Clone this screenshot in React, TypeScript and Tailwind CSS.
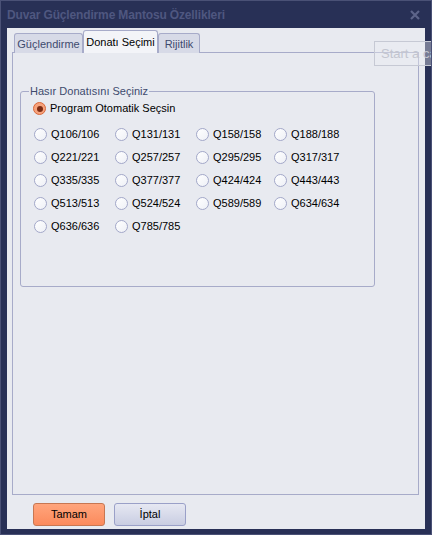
import React from "react";

const sizes = [
  ["Q106/106", "Q131/131", "Q158/158", "Q188/188"],
  ["Q221/221", "Q257/257", "Q295/295", "Q317/317"],
  ["Q335/335", "Q377/377", "Q424/424", "Q443/443"],
  ["Q513/513", "Q524/524", "Q589/589", "Q634/634"],
  ["Q636/636", "Q785/785"],
];

const Radio = ({ checked = false }: { checked?: boolean }) =>
  checked ? (
    <span className="w-[13px] h-[13px] shrink-0 rounded-full border border-[#d8683a] bg-[#f7a27c] flex items-center justify-center">
      <span className="w-[6px] h-[6px] rounded-full bg-[#7c2c14]" />
    </span>
  ) : (
    <span className="w-[13px] h-[13px] shrink-0 rounded-full border border-[#a3a8c9] bg-gradient-to-br from-[#ffffff] to-[#eef0f6]" />
  );

const Option = ({ label, checked }: { label: string; checked?: boolean }) => (
  <label className="flex items-center gap-[4px] h-[23px] text-[11px] text-black whitespace-nowrap">
    <Radio checked={checked} />
    <span>{label}</span>
  </label>
);

const Tabs = () => (
  <div className="h-[25px] flex items-end pl-[2px] -mb-px relative z-10 text-[11px]">
    <div className="w-[69px] h-[20px] pt-[1px] border border-b-0 border-[#a7abc9] rounded-t-[3px] bg-[#d7dae7] text-[#3e4a6e] flex items-center justify-center">
      Güçlendirme
    </div>
    <div className="w-[75px] h-[23px] border border-b-0 border-[#a7abc9] rounded-t-[3px] bg-[#f3f4f8] text-black flex items-center justify-center">
      Donatı Seçimi
    </div>
    <div className="w-[42px] h-[20px] pt-[1px] border border-b-0 border-[#a7abc9] rounded-t-[3px] bg-[#d7dae7] text-[#3e4a6e] flex items-center justify-center">
      Rijitlik
    </div>
  </div>
);

const MeshGroup = () => (
  <fieldset className="ml-[7px] mr-[43px] mt-[31px] h-[203px] border border-[#a7abc9] rounded-[3px] p-0">
    <legend className="ml-[8px] px-[1px] text-[11px] leading-[14px] text-[#3e4a6e]">Hasır Donatısını Seçiniz</legend>
    <div className="pl-[12px] -mt-[1px]">
      <Option label="Program Otomatik Seçsin" checked />
    </div>
    <div className="pl-[13px] grid grid-cols-[81px_81px_78px_auto] mt-[3px]">
      {sizes.flat().map((s) => (
        <Option key={s} label={s} />
      ))}
    </div>
  </fieldset>
);

export default function App() {
  return (
    <div
      className="relative w-[432px] h-[535px] overflow-hidden bg-[#283056] border border-[#4a5176] flex flex-col"
      style={{ fontFamily: '"Liberation Sans", Arial, sans-serif' }}
    >
      <div className="h-[27px] shrink-0 flex items-center justify-between pl-[6px] pr-[11px]">
        <span className="text-[12px] tracking-[-0.15px] font-bold text-[#4f5780]">Duvar Güçlendirme Mantosu Özellikleri</span>
        <svg width="10" height="10" viewBox="0 0 10 10" className="mt-[1px]">
          <path d="M1 1 L9 9 M9 1 L1 9" stroke="#5d648a" strokeWidth="2.2" />
        </svg>
      </div>

      <div className="flex-1 mx-[6px] mb-[5px] bg-[#e8eaf0] flex flex-col pl-[5px] pr-[6px]">
        <Tabs />
        <div className="h-[443px] border border-[#a7abc9] bg-[#e8eaf0] flex flex-col">
          <MeshGroup />
        </div>
        <div className="flex-1 flex items-start pt-[8px] pl-[21px] gap-[9px] text-[11px]">
          <button className="w-[72px] h-[23px] rounded-[3px] border border-[#c77752] bg-gradient-to-b from-[#ffa57c] to-[#fb8a5c] text-black">
            Tamam
          </button>
          <button className="w-[72px] h-[23px] rounded-[3px] border border-[#9aa0c8] bg-gradient-to-b from-[#e6e8f2] to-[#c9cde2] text-black">
            İptal
          </button>
        </div>
      </div>

      <div className="absolute left-[373px] top-[40px] w-[80px] h-[25px] border border-[#c6c9d4] bg-[#eceef3]/40 text-[13px] text-[#c2c5cf] pl-[6px] leading-[23px] whitespace-nowrap">
        Start a ca
      </div>
    </div>
  );
}
